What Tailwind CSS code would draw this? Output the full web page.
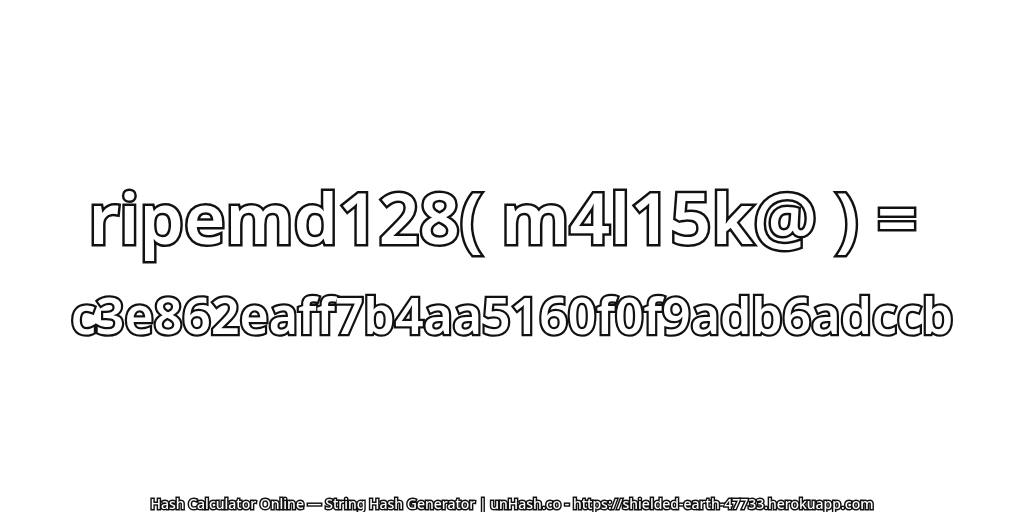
<!DOCTYPE html>
<html lang="en">
<head>
  <meta charset="UTF-8" />
  <title>unHash</title>
  <script src="https://cdn.jsdelivr.net/npm/@tailwindcss/browser@4"></script>
</head>
<body class="bg-white">
  <div class="w-[1024px] h-[512px] flex flex-col items-center overflow-hidden font-['Noto_Sans',sans-serif] will-change-transform">
    <div class="mt-[177px] pr-[18px] text-[71px] leading-[80px] font-semibold text-white whitespace-nowrap [-webkit-text-stroke:5px_#111] [paint-order:stroke_fill]">ripemd128( m4l15k@ ) =</div>
    <div class="mt-[23px] text-[50px] leading-[70px] font-semibold text-white whitespace-nowrap [-webkit-text-stroke:4.5px_#111] [paint-order:stroke_fill]">c3e862eaff7b4aa5160f0f9adb6adccb</div>
    <div class="mt-auto text-[14px] leading-[16px] font-medium text-white whitespace-nowrap [-webkit-text-stroke:3px_#111] [paint-order:stroke_fill]">Hash Calculator Online — String Hash Generator | unHash.co - https://shielded-earth-47733.herokuapp.com</div>
  </div>
</body>
</html>
